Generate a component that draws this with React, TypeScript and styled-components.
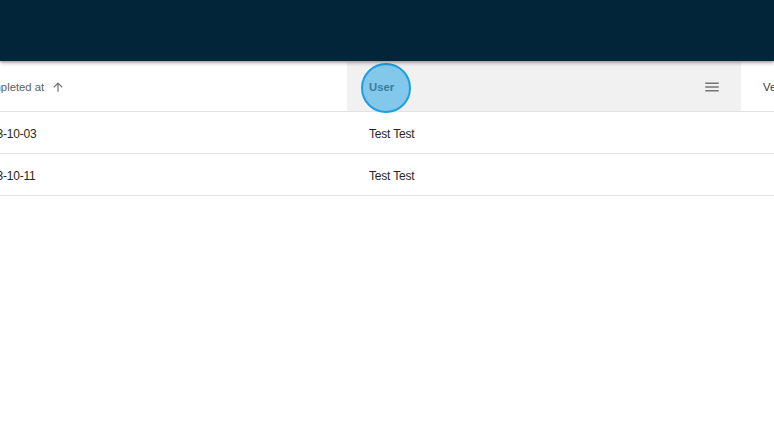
import styled, { createGlobalStyle } from "styled-components";

const GlobalStyle = createGlobalStyle`
  html, body {
    margin: 0;
    padding: 0;
    background: #ffffff;
    font-family: "Liberation Sans", Arial, sans-serif;
  }
`;

const Page = styled.div`
  width: 774px;
  height: 433px;
  overflow: hidden;
  background: #ffffff;
`;

const TopBar = styled.header`
  position: relative;
  z-index: 2;
  height: 61px;
  background: #02253a;
  box-shadow: 0 2px 4px rgba(0, 0, 0, 0.28), 0 1px 2px rgba(0, 0, 0, 0.2);
`;

const Viewport = styled.div`
  overflow: hidden;
  margin-top: 1px;
`;

const Grid = styled.div`
  display: flex;
  flex-direction: column;
  width: max-content;
  margin-left: -45px; /* horizontal scroll position */
`;

const HeaderRow = styled.div`
  display: flex;
  height: 49px;
  border-bottom: 1px solid #e2e2e2;
`;

const HeaderCell = styled.div<{ $w: number; $active?: boolean }>`
  position: relative;
  display: flex;
  align-items: center;
  width: ${(p) => p.$w}px;
  box-sizing: border-box;
  padding: 0 20px 0 22px;
  background: ${(p) => (p.$active ? "#f1f1f1" : "#ffffff")};
  font-size: 11.3px;
`;

const HeaderTitle = styled.span<{ $strong?: boolean; $dark?: boolean }>`
  font-weight: ${(p) => (p.$strong ? 700 : 400)};
  color: ${(p) => (p.$strong ? "#4a4a4a" : p.$dark ? "#3a3a3a" : "#606060")};
`;

const SortIcon = styled.svg`
  width: 14px;
  height: 14px;
  margin-left: 7px;
  fill: #6f6f6f;
`;

const MenuIcon = styled.svg`
  width: 18px;
  height: 18px;
  margin-left: auto;
  fill: #757575;
`;

const Row = styled.div`
  display: flex;
  height: 41px;
  border-bottom: 1px solid #e2e2e2;
`;

const Cell = styled.div<{ $w: number }>`
  display: flex;
  align-items: center;
  width: ${(p) => p.$w}px;
  box-sizing: border-box;
  padding: 2px 22px 0;
  font-size: 12px;
  letter-spacing: -0.2px;
  color: #262626;
`;

const ClickMark = styled.div`
  position: absolute;
  left: 14px;
  top: 1px;
  width: 46px;
  height: 46px;
  border-radius: 50%;
  border: 2px solid #1b9ee2;
  background: rgba(40, 165, 230, 0.55);
  pointer-events: none;
`;

const columns = [
  { key: "completed", title: "Completed at", width: 392 },
  { key: "user", title: "User", width: 394 },
  { key: "version", title: "Version", width: 120 },
];

const rows = [
  { id: 1, completed: "2023-10-03", user: "Test Test", version: "" },
  { id: 2, completed: "2023-10-11", user: "Test Test", version: "" },
];

export default function App() {
  return (
    <Page>
      <GlobalStyle />
      <TopBar />
      <Viewport>
        <Grid>
          <HeaderRow>
            <HeaderCell $w={columns[0].width}>
              <HeaderTitle>{columns[0].title}</HeaderTitle>
              <SortIcon viewBox="0 0 24 24">
                <path d="M4 12l1.41 1.41L11 7.83V20h2V7.83l5.58 5.59L20 12l-8-8-8 8z" />
              </SortIcon>
            </HeaderCell>
            <HeaderCell $w={columns[1].width} $active>
              <HeaderTitle $strong>{columns[1].title}</HeaderTitle>
              <MenuIcon viewBox="0 0 24 24">
                <path d="M3 18h18v-2H3v2zm0-5h18v-2H3v2zm0-7v2h18V6H3z" />
              </MenuIcon>
              <ClickMark />
            </HeaderCell>
            <HeaderCell $w={columns[2].width}>
              <HeaderTitle $dark>{columns[2].title}</HeaderTitle>
            </HeaderCell>
          </HeaderRow>
          {rows.map((r) => (
            <Row key={r.id}>
              <Cell $w={columns[0].width}>{r.completed}</Cell>
              <Cell $w={columns[1].width}>{r.user}</Cell>
              <Cell $w={columns[2].width}>{r.version}</Cell>
            </Row>
          ))}
        </Grid>
      </Viewport>
    </Page>
  );
}
